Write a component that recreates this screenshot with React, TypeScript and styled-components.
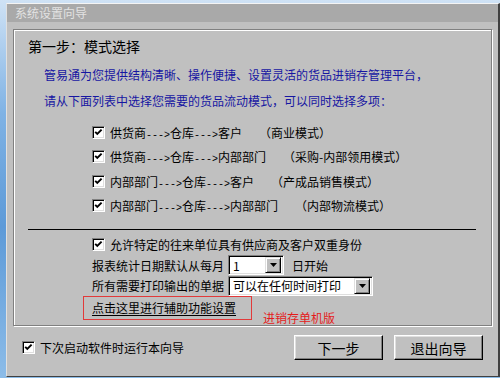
import React, { FC } from 'react';
import styled, { createGlobalStyle } from 'styled-components';

const GlobalStyle = createGlobalStyle`
  html, body {
    margin: 0;
    padding: 0;
    width: 500px;
    height: 378px;
    overflow: hidden;
    background: linear-gradient(180deg, #cfe2f5 0%, #7fb2e4 30%, #5d9ad8 60%, #8cbce8 100%);
  }
  * {
    box-sizing: border-box;
  }
`;

const font = `"Noto Sans CJK SC", "Noto Sans", sans-serif`;

const Window = styled.div`
  margin: 3px 0 0 6px;
  width: 494px;
  height: 374px;
  display: flex;
  flex-direction: column;
  background: #c0c0c0;
  border-top: 1px solid #f4f4f4;
  border-left: 1px solid #e0e0e0;
  border-right: 2px solid #404040;
  border-bottom: 1px solid #404040;
  font-family: ${font};
  font-size: 12px;
  color: #000;
`;

const TitleBar = styled.div`
  height: 18px;
  line-height: 18px;
  padding-left: 8px;
  background: #a9a9a9;
  color: #e2e2e2;
  font-size: 12px;
`;

const Body = styled.div`
  flex: 1;
  display: flex;
  flex-direction: column;
  padding: 7px 0 0 6px;
`;

const Panel = styled.div`
  width: 479px;
  height: 297px;
  display: flex;
  flex-direction: column;
  border: 1px solid #808080;
  box-shadow: inset 1px 1px 0 #fff, 1px 1px 0 #fff;
`;

const Heading = styled.div`
  margin: 8px 0 0 14px;
  font-size: 14px;
  line-height: 16px;
`;

const Intro = styled.div`
  margin: 8px 0 6px 30px;
  color: #1616a2;
  line-height: 26px;
`;

const CheckRow = styled.div<{ $h?: number; $ml?: number }>`
  display: flex;
  align-items: center;
  height: ${p => p.$h ?? 25}px;
  margin-left: ${p => p.$ml ?? 78}px;
  gap: 5px;
  white-space: nowrap;
`;

const Dashes = styled.span`
  font-family: "Liberation Mono", monospace;
  font-size: 10px;
`;

const Mode = styled.span`
  margin-left: 12px;
`;

const Box = styled.span`
  width: 13px;
  height: 13px;
  flex: none;
  display: flex;
  align-items: center;
  justify-content: center;
  background: #fff;
  border-top: 1px solid #808080;
  border-left: 1px solid #808080;
  border-bottom: 1px solid #fff;
  border-right: 1px solid #fff;
  box-shadow: inset 1px 1px 0 #000, inset -1px -1px 0 #dfdfdf;
`;

const Separator = styled.div`
  margin: 11px 0 4px 14px;
  width: 448px;
  height: 1px;
  background: #000;
`;

const FormRow = styled.div`
  display: flex;
  align-items: center;
  height: 21px;
  margin-left: 78px;
  white-space: nowrap;
`;

const Select = styled.div<{ $w: number }>`
  width: ${p => p.$w}px;
  height: 20px;
  margin: 0 8px 0 4px;
  display: flex;
  align-items: center;
  background: #fff;
  border-top: 1px solid #808080;
  border-left: 1px solid #808080;
  border-bottom: 1px solid #fff;
  border-right: 1px solid #fff;
  box-shadow: inset 1px 1px 0 #000, inset -1px -1px 0 #dfdfdf;
  padding: 0 2px 0 4px;
`;

const SelectText = styled.span`
  flex: 1;
`;

const DropButton = styled.span`
  width: 16px;
  height: 16px;
  display: flex;
  align-items: center;
  justify-content: center;
  background: #c0c0c0;
  border-top: 1px solid #dfdfdf;
  border-left: 1px solid #dfdfdf;
  border-bottom: 1px solid #000;
  border-right: 1px solid #000;
  box-shadow: inset 1px 1px 0 #fff, inset -1px -1px 0 #808080;
`;

const RedRow = styled.div`
  display: flex;
  align-items: flex-start;
  margin-left: 69px;
`;

const RedBox = styled.div`
  width: 169px;
  height: 24px;
  padding: 1px 0 0 8px;
  border: 1px solid #e23a3a;
  line-height: 19px;
`;

const LinkText = styled.span`
  text-decoration: underline;
  text-underline-offset: 2px;
`;

const RedLabel = styled.span`
  margin: 15px 0 0 11px;
  line-height: 14px;
  color: #e41c1c;
`;

const Footer = styled.div`
  display: flex;
  align-items: center;
  height: 25px;
  margin-top: 9px;
  padding: 0 15px 0 9px;
`;

const Button = styled.button`
  width: 89px;
  height: 25px;
  margin-left: 11px;
  padding: 0;
  background: #c0c0c0;
  font-family: ${font};
  font-size: 14px;
  color: #000;
  border-top: 1px solid #fff;
  border-left: 1px solid #fff;
  border-bottom: 1px solid #000;
  border-right: 1px solid #000;
  box-shadow: inset -1px -1px 0 #808080, inset 1px 1px 0 #dfdfdf;
  &:first-of-type {
    margin-left: auto;
  }
`;

const Check: FC = () => (
  <Box>
    <svg width="9" height="9" viewBox="0 0 9 9">
      <polyline points="1.2,3.8 3.3,6 7.6,1.6" fill="none" stroke="#000" strokeWidth="1.9" />
    </svg>
  </Box>
);

const Arrow: FC = () => (
  <svg width="7" height="4" viewBox="0 0 7 4">
    <polygon points="0,0 7,0 3.5,4" fill="#000" />
  </svg>
);

const Flow: FC<{ steps: string[] }> = ({ steps }) => (
  <span>
    {steps.map((s, i) => (
      <React.Fragment key={i}>
        {i > 0 && <Dashes>---&gt;</Dashes>}
        {s}
      </React.Fragment>
    ))}
  </span>
);

const modes = [
  { steps: ['供货商', '仓库', '客户'], label: '（商业模式）' },
  { steps: ['供货商', '仓库', '内部部门'], label: '（采购-内部领用模式）' },
  { steps: ['内部部门', '仓库', '客户'], label: '（产成品销售模式）' },
  { steps: ['内部部门', '仓库', '内部部门'], label: '（内部物流模式）' },
];

const App: FC = () => {
  return (
    <>
      <GlobalStyle />
      <Window>
        <TitleBar>系统设置向导</TitleBar>
        <Body>
          <Panel>
            <Heading>第一步：模式选择</Heading>
            <Intro>
              <div>管易通为您提供结构清晰、操作便捷、设置灵活的货品进销存管理平台，</div>
              <div>请从下面列表中选择您需要的货品流动模式，可以同时选择多项：</div>
            </Intro>
            {modes.map(m => (
              <CheckRow key={m.label}>
                <Check />
                <Flow steps={m.steps} />
                <Mode>{m.label}</Mode>
              </CheckRow>
            ))}
            <Separator />
            <CheckRow $h={21}>
              <Check />
              <span>允许特定的往来单位具有供应商及客户双重身份</span>
            </CheckRow>
            <FormRow>
              报表统计日期默认从每月
              <Select $w={56}>
                <SelectText>1</SelectText>
                <DropButton><Arrow /></DropButton>
              </Select>
              日开始
            </FormRow>
            <FormRow>
              所有需要打印输出的单据
              <Select $w={145}>
                <SelectText>可以在任何时间打印</SelectText>
                <DropButton><Arrow /></DropButton>
              </Select>
            </FormRow>
            <RedRow>
              <RedBox>
                <LinkText>点击这里进行辅助功能设置</LinkText>
              </RedBox>
              <RedLabel>进销存单机版</RedLabel>
            </RedRow>
          </Panel>
          <Footer>
            <CheckRow $h={25} $ml={0}>
              <Check />
              <span>下次启动软件时运行本向导</span>
            </CheckRow>
            <Button>下一步</Button>
            <Button>退出向导</Button>
          </Footer>
        </Body>
      </Window>
    </>
  );
};

export default App;
